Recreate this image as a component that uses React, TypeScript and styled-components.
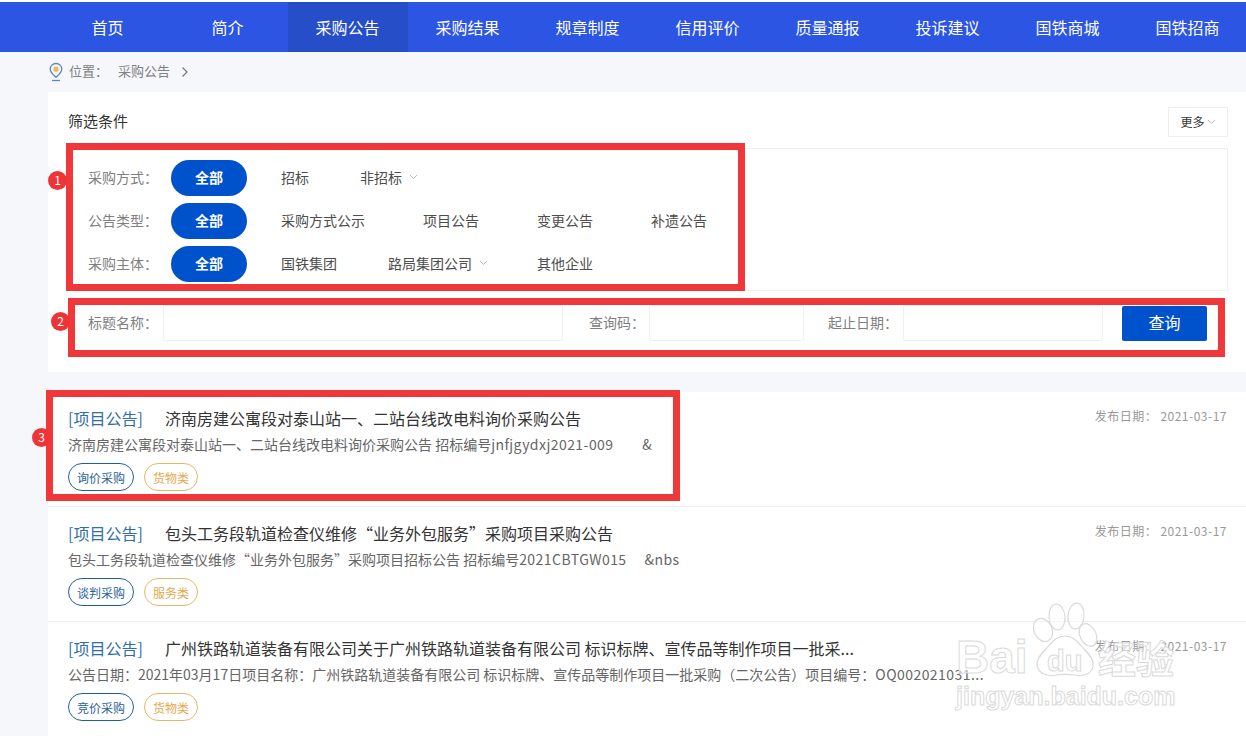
import React from "react";
import styled, { createGlobalStyle } from "styled-components";

const GlobalStyle = createGlobalStyle`
  html, body {
    margin: 0;
    padding: 0;
    background: #f5f7fb;
    overflow: hidden;
  }
  * { box-sizing: border-box; }
  body {
    font-family: "Noto Sans CJK SC", "Noto Sans", sans-serif;
  }
`;

const Page = styled.div`
  position: relative;
  width: 1246px;
  height: 736px;
  overflow: hidden;
  padding-top: 2px;
  background: linear-gradient(#fff 2px, #f5f7fb 2px);
`;

const Nav = styled.nav`
  display: flex;
  height: 50px;
  padding-left: 48px;
  background: #2b55e2;
`;

const NavItem = styled.a<{ $active?: boolean }>`
  flex: 0 0 120px;
  padding-right: 1px;
  line-height: 50px;
  text-align: center;
  font-size: 16px;
  color: #fff;
  background: ${(p) => (p.$active ? "#254ec8" : "transparent")};
`;

const Content = styled.main`
  margin-left: 48px;
`;

const Crumbs = styled.div`
  display: flex;
  align-items: center;
  height: 40px;
  font-size: 13px;
  color: #808080;
  svg { flex: none; }
`;

const CrumbText = styled.span`
  padding-bottom: 4px;
`;

const CrumbLabel = styled(CrumbText)`
  margin-left: 5px;
  margin-right: 10px;
`;

const CrumbArrow = styled.span`
  display: flex;
  margin-left: 11px;
`;

const FilterPanel = styled.section`
  height: 280px;
  padding: 15px 18px 0 20px;
  background: #fff;
`;

const PanelHead = styled.div`
  display: flex;
  align-items: center;
  justify-content: space-between;
  height: 30px;
  margin-bottom: 11px;
`;

const PanelTitle = styled.h3`
  margin: 0;
  padding-bottom: 3px;
  font-size: 15px;
  font-weight: 400;
  color: #333;
`;

const MoreButton = styled.button`
  display: flex;
  align-items: center;
  justify-content: center;
  gap: 2px;
  width: 60px;
  height: 30px;
  padding: 0 0 1px;
  border: 1px solid #eeeeee;
  background: #fff;
  font: inherit;
  font-size: 12px;
  color: #333;
`;

const FilterBox = styled.div`
  height: 143px;
  padding-top: 7px;
  border: 1px solid #eeeeee;
  border-bottom-color: #f2f2f2;
`;

const FilterRow = styled.div`
  display: flex;
  align-items: center;
  height: 43px;
  padding-left: 19px;
`;

const FieldLabel = styled.span`
  flex: none;
  padding-bottom: 2px;
  font-size: 14px;
  color: #808080;
`;

const RowLabel = styled(FieldLabel)`
  width: 83px;
`;

const AllPill = styled.button`
  flex: none;
  width: 76px;
  height: 36px;
  margin-right: 34px;
  padding: 0 0 2px;
  border: 0;
  border-radius: 18px;
  background: #0052cc;
  color: #fff;
  font: inherit;
  font-size: 14px;
  font-weight: 700;
`;

const Option = styled.span<{ $width: number }>`
  display: flex;
  align-items: center;
  flex: 0 0 ${(p) => p.$width}px;
  padding-bottom: 2px;
  font-size: 14px;
  color: #4d4d4d;
  svg { margin-left: 7px; }
`;

const SearchRow = styled.div`
  display: flex;
  align-items: center;
  height: 36px;
  margin-top: 14px;
  padding-left: 20px;
`;

const SearchInput = styled.input<{ $width: number }>`
  flex: 0 0 ${(p) => p.$width}px;
  min-width: 0;
  height: 36px;
  padding: 0 8px;
  border: 1px solid #f0f0f0;
  border-radius: 2px;
  outline: none;
`;

const TitleLabel = styled(FieldLabel)`
  width: 75px;
`;

const CodeLabel = styled(FieldLabel)`
  width: 60px;
  margin-left: 26px;
`;

const DateLabel = styled(FieldLabel)`
  width: 75px;
  margin-left: 24px;
`;

const SearchButton = styled.button`
  flex: none;
  width: 85px;
  height: 35px;
  margin-left: 19px;
  padding: 0 0 2px;
  border: 0;
  border-radius: 2px;
  background: #0052cc;
  color: #fff;
  font: inherit;
  font-size: 16px;
`;

const List = styled.section`
  margin-top: 20px;
  background: #fff;
`;

const Item = styled.article`
  position: relative;
  height: 115px;
  padding: 14px 18px 0 20px;
  border-bottom: 1px solid #ececec;
`;

const ItemTitle = styled.div`
  display: flex;
  height: 26px;
  line-height: 24px;
  font-size: 16px;
  color: #333;
`;

const ItemKind = styled.span`
  width: 97px;
  color: #2f6ea9;
`;

const ItemDesc = styled.p`
  margin: 0;
  height: 24px;
  line-height: 24px;
  font-size: 14px;
  color: #666;
  white-space: pre;
`;

const ItemCode = styled.span`
  letter-spacing: 0.45px;
`;

const ItemDate = styled.span`
  position: absolute;
  top: 15px;
  right: 19px;
  font-size: 12px;
  line-height: 18px;
  color: #999;
  letter-spacing: 0.5px;
`;

const Tags = styled.div`
  display: flex;
  gap: 10px;
  margin-top: 7px;
`;

const Tag = styled.span<{ $tone: "blue" | "orange" }>`
  display: flex;
  align-items: center;
  justify-content: center;
  width: ${(p) => (p.$tone === "blue" ? 66 : 54)}px;
  height: 28px;
  border: 1px solid ${(p) => (p.$tone === "blue" ? "#1f5f9e" : "#e8b765")};
  border-radius: 14px;
  font-size: 12px;
  color: ${(p) => (p.$tone === "blue" ? "#2b6299" : "#e3a94e")};
`;

const Mark = styled.div<{ $l: number; $t: number; $w: number; $h: number }>`
  position: absolute;
  left: ${(p) => p.$l}px;
  top: ${(p) => p.$t}px;
  width: ${(p) => p.$w}px;
  height: ${(p) => p.$h}px;
  border: 7px solid #f0383a;
  pointer-events: none;
`;

const Badge = styled.span<{ $l: number; $t: number }>`
  position: absolute;
  left: ${(p) => p.$l}px;
  top: ${(p) => p.$t}px;
  width: 19px;
  height: 19px;
  border-radius: 50%;
  background: #ef3438;
  color: #fff;
  font-size: 12px;
  line-height: 18px;
  text-align: center;
`;

const Watermark = styled.div`
  position: absolute;
  left: 955px;
  top: 600px;
  width: 230px;
  height: 115px;
  pointer-events: none;
  svg { position: absolute; left: 0; top: 0; }
`;

const MarkText = styled.span<{ $l: number; $t: number; $size: number }>`
  position: absolute;
  left: ${(p) => p.$l}px;
  top: ${(p) => p.$t}px;
  font-family: "Liberation Sans", "Noto Sans CJK SC", sans-serif;
  font-size: ${(p) => p.$size}px;
  font-weight: 700;
  line-height: 1;
  white-space: nowrap;
  color: rgba(255, 255, 255, 0.55);
  -webkit-text-stroke: 1px #dadada;
`;

const Chevron = () => (
  <svg width="9" height="6" viewBox="0 0 9 6" fill="none">
    <path d="M1 1l3.500 3.500L8 1" stroke="#bbbbbb" strokeWidth="1" />
  </svg>
);

const navItems = ["首页", "简介", "采购公告", "采购结果", "规章制度", "信用评价", "质量通报", "投诉建议", "国铁商城", "国铁招商"];

const notices = [
  {
    title: "济南房建公寓段对泰山站一、二站台线改电料询价采购公告",
    desc: "济南房建公寓段对泰山站一、二站台线改电料询价采购公告 招标编号",
    code: "jnfjgydxj2021-009        &",
    method: "询价采购",
    type: "货物类",
  },
  {
    title: "包头工务段轨道检查仪维修“业务外包服务”采购项目采购公告",
    desc: "包头工务段轨道检查仪维修“业务外包服务”采购项目招标公告 招标编号",
    code: "2021CBTGW015     &nbs",
    method: "谈判采购",
    type: "服务类",
  },
  {
    title: "广州铁路轨道装备有限公司关于广州铁路轨道装备有限公司 标识标牌、宣传品等制作项目一批采...",
    desc: "公告日期：2021年03月17日项目名称：广州铁路轨道装备有限公司 标识标牌、宣传品等制作项目一批采购（二次公告）项目编号：",
    code: "OQ002021031...",
    method: "竞价采购",
    type: "货物类",
  },
];

export default function App() {
  return (
    <Page>
      <GlobalStyle />
      <Nav>
        {navItems.map((item) => (
          <NavItem key={item} $active={item === "采购公告"}>
            {item}
          </NavItem>
        ))}
      </Nav>
      <Content>
        <Crumbs>
          <svg width="16" height="20" viewBox="0 0 16 20" fill="none">
            <path d="M8 1.500c-3.300 0-5.800 2.500-5.800 5.600 0 3.400 3.400 6 5.800 8.200 2.400-2.200 5.800-4.800 5.800-8.200 0-3.100-2.500-5.600-5.800-5.600z" stroke="#5b86b8" strokeWidth="1.300" />
            <circle cx="8" cy="7.200" r="2.600" fill="#f0b94a" />
            <path d="M4 18.500h8" stroke="#5b86b8" strokeWidth="1.300" />
          </svg>
          <CrumbLabel>位置：</CrumbLabel>
          <CrumbText>采购公告</CrumbText>
          <CrumbArrow>
            <svg width="8" height="12" viewBox="0 0 8 12" fill="none">
              <path d="M1.500 1.500L6 6l-4.500 4.500" stroke="#777" strokeWidth="1.200" />
            </svg>
          </CrumbArrow>
        </Crumbs>
        <FilterPanel>
          <PanelHead>
            <PanelTitle>筛选条件</PanelTitle>
            <MoreButton>
              更多
              <Chevron />
            </MoreButton>
          </PanelHead>
          <FilterBox>
            <FilterRow>
              <RowLabel>采购方式：</RowLabel>
              <AllPill>全部</AllPill>
              <Option $width={79}>招标</Option>
              <Option $width={90}>
                非招标
                <Chevron />
              </Option>
            </FilterRow>
            <FilterRow>
              <RowLabel>公告类型：</RowLabel>
              <AllPill>全部</AllPill>
              <Option $width={142}>采购方式公示</Option>
              <Option $width={114}>项目公告</Option>
              <Option $width={114}>变更公告</Option>
              <Option $width={114}>补遗公告</Option>
            </FilterRow>
            <FilterRow>
              <RowLabel>采购主体：</RowLabel>
              <AllPill>全部</AllPill>
              <Option $width={107}>国铁集团</Option>
              <Option $width={149}>
                路局集团公司
                <Chevron />
              </Option>
              <Option $width={114}>其他企业</Option>
            </FilterRow>
          </FilterBox>
          <SearchRow>
            <TitleLabel>标题名称：</TitleLabel>
            <SearchInput $width={400} />
            <CodeLabel>查询码：</CodeLabel>
            <SearchInput $width={155} />
            <DateLabel>起止日期：</DateLabel>
            <SearchInput $width={200} />
            <SearchButton>查询</SearchButton>
          </SearchRow>
        </FilterPanel>
        <List>
          {notices.map((n) => (
            <Item key={n.title}>
              <ItemTitle>
                <ItemKind>[项目公告]</ItemKind>
                {n.title}
              </ItemTitle>
              <ItemDesc>
                {n.desc}
                <ItemCode>{n.code}</ItemCode>
              </ItemDesc>
              <Tags>
                <Tag $tone="blue">{n.method}</Tag>
                <Tag $tone="orange">{n.type}</Tag>
              </Tags>
              <ItemDate>发布日期： 2021-03-17</ItemDate>
            </Item>
          ))}
        </List>
      </Content>

      <Mark $l={66} $t={143} $w={679} $h={148} />
      <Mark $l={68} $t={298} $w={1157} $h={59} />
      <Mark $l={46} $t={390} $w={634} $h={111} />
      <Badge $l={48} $t={171}>1</Badge>
      <Badge $l={51} $t={312}>2</Badge>
      <Badge $l={32} $t={428}>3</Badge>

      <Watermark>
        <svg width="230" height="115" viewBox="0 0 230 115" fill="rgba(255,255,255,0.55)" stroke="#dadada" strokeWidth="1.200">
          <ellipse cx="88" cy="30" rx="9" ry="12" transform="rotate(-25 88 30)" />
          <ellipse cx="102" cy="17" rx="8" ry="13" transform="rotate(-5 102 17)" />
          <ellipse cx="121" cy="16" rx="8" ry="13" transform="rotate(5 121 16)" />
          <ellipse cx="133" cy="35" rx="8" ry="12" transform="rotate(-25 133 35)" />
          <path d="M110 36c-10 0-14 8-19 13-6 6-10 11-9 17 2 8 11 11 20 9 6-1 11-1 17 0 9 2 18-1 19-9 1-6-3-11-9-17-5-5-9-13-19-13z" />
        </svg>
        <MarkText $l={1} $t={34} $size={46}>Bai</MarkText>
        <MarkText $l={92} $t={47} $size={29}>du</MarkText>
        <MarkText $l={143} $t={41} $size={38}>经验</MarkText>
        <MarkText $l={1} $t={84} $size={25}>jingyan.baidu.com</MarkText>
      </Watermark>
    </Page>
  );
}
